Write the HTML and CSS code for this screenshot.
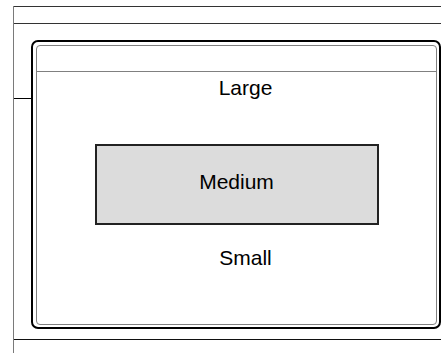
FILE: index.html
```html
<!DOCTYPE html>
<html>
<head>
<meta charset="utf-8">
<link rel="stylesheet" href="styles.css">
</head>
<body>
<div class="frame">
  <div class="topbar"></div>
  <div class="main">
    <div class="stub"></div>
    <div class="panel">
      <div class="inner">
        <div class="inner-head"></div>
        <div class="content">
          <div class="label large">Large</div>
          <div class="medium">Medium</div>
          <div class="label small">Small</div>
        </div>
      </div>
    </div>
  </div>
  <div class="bottom"></div>
</div>
</body>
</html>
```
FILE: styles.css
```css
html, body {
  margin: 0;
  padding: 0;
  background: #ffffff;
  height: 353px;
  overflow: hidden;
  font-family: "Liberation Sans", Arial, sans-serif;
  color: #000;
}
.frame {
  margin: 6px 0 0 13px;
  border-left: 1px solid #7a7a7a;
  height: 347px;
}
.topbar {
  height: 16px;
  border-top: 1px solid #333;
  border-bottom: 1px solid #333;
}
.main {
  display: flex;
  padding-top: 16px;
}
.stub {
  width: 17px;
  height: 58px;
  border-bottom: 1px solid #000;
  flex: none;
}
.panel {
  flex: 1;
  height: 289px;
  box-sizing: border-box;
  border: 2px solid #000;
  border-radius: 7px;
  padding: 3px 2px 2px 3px;
}
.inner {
  height: 100%;
  box-sizing: border-box;
  border: 1px solid #808080;
  border-radius: 4px;
  display: flex;
  flex-direction: column;
}
.inner-head {
  height: 25px;
  border-bottom: 1px solid #808080;
  flex: none;
}
.content {
  flex: 1;
  display: flex;
  flex-direction: column;
  align-items: center;
}
.label {
  font-size: 21px;
  line-height: 32px;
  height: 32px;
  padding-left: 18px;
}
.medium {
  margin-top: 40px;
  width: 284px;
  height: 81px;
  box-sizing: border-box;
  border: 2px solid #222;
  background: #dcdcdc;
  display: flex;
  align-items: center;
  justify-content: center;
  font-size: 21px;
  padding-bottom: 5px;
}
.small {
  margin-top: 17px;
}
.bottom {
  margin-top: 10px;
  border-top: 1px solid #111;
}
```
